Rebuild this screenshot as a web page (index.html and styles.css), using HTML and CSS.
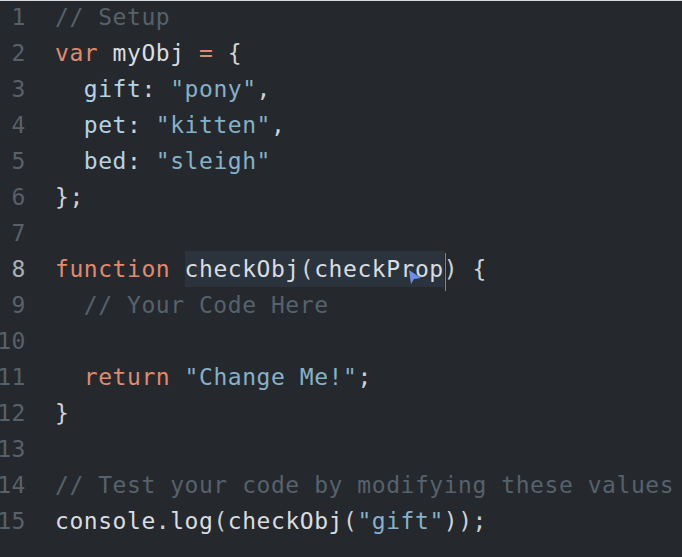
FILE: index.html
```html
<!DOCTYPE html>
<html>
<head>
<meta charset="utf-8">
<link rel="stylesheet" href="styles.css">
</head>
<body>
<div class="editor">
  <div class="gutter">
    <div class="ln">1</div><div class="ln">2</div><div class="ln">3</div><div class="ln">4</div><div class="ln">5</div>
    <div class="ln">6</div><div class="ln">7</div><div class="ln active">8</div><div class="ln">9</div><div class="ln">10</div>
    <div class="ln">11</div><div class="ln">12</div><div class="ln">13</div><div class="ln">14</div><div class="ln">15</div>
  </div>
  <div class="code">
    <div class="line"><span class="cm">// Setup</span></div>
    <div class="line"><span class="kw">var</span> <span class="id">myObj</span> <span class="op">=</span> <span class="pn">{</span></div>
    <div class="line">  <span class="pr">gift</span><span class="pn">:</span> <span class="st">"pony"</span><span class="pn">,</span></div>
    <div class="line">  <span class="pr">pet</span><span class="pn">:</span> <span class="st">"kitten"</span><span class="pn">,</span></div>
    <div class="line">  <span class="pr">bed</span><span class="pn">:</span> <span class="st">"sleigh"</span></div>
    <div class="line"><span class="pn">};</span></div>
    <div class="line"> </div>
    <div class="line"><span class="kw">function</span> <span class="sel"><span class="id">checkObj</span><span class="pn">(</span><span class="id">checkProp</span><span class="caret"></span><svg class="pointer" width="14" height="16" viewBox="0 0 14 16"><path d="M1 1 L13 9 L6 10 L3 15 Z" fill="#6f8fe6"/></svg></span><span class="pn">)</span> <span class="pn">{</span></div>
    <div class="line">  <span class="cm">// Your Code Here</span></div>
    <div class="line"> </div>
    <div class="line">  <span class="kw">return</span> <span class="st">"Change Me!"</span><span class="pn">;</span></div>
    <div class="line"><span class="pn">}</span></div>
    <div class="line"> </div>
    <div class="line"><span class="cm">// Test your code by modifying these values</span></div>
    <div class="line"><span class="id">console</span><span class="pn">.</span><span class="id">log</span><span class="pn">(</span><span class="id">checkObj</span><span class="pn">(</span><span class="st">"gift"</span><span class="pn">));</span></div>
  </div>
</div>
</body>
</html>
```

FILE: styles.css
```css
html, body {
  margin: 0;
  padding: 0;
  background: #25282c;
  overflow: hidden;
}
body {
  width: 682px;
  height: 557px;
  border-top: 1px solid #d8dadc;
  box-sizing: border-box;
}
.editor {
  display: flex;
  margin-top: -2px;
  font-family: "DejaVu Sans Mono", "Liberation Mono", monospace;
  font-size: 23px;
  letter-spacing: 0.55px;
  line-height: 36px;
  color: #d6dadd;
}
.gutter {
  width: 30px;
  margin-left: -4px;
  text-align: right;
  color: #58616a;
  flex: none;
}
.ln.active {
  color: #a7b0b8;
}
.code {
  margin-left: 29px;
}
.line {
  height: 36px;
  white-space: pre;
}
.cm { color: #56626c; }
.kw { color: #e08a70; }
.id { color: #d9dde0; }
.op { color: #e08a70; }
.pn { color: #cfd3d6; }
.pr { color: #b5d3e3; }
.st { color: #86b1c9; }
.sel {
  position: relative;
  display: inline-block;
  background: #2b333c;
}
.caret {
  position: absolute;
  right: -2px;
  top: 2px;
  width: 1px;
  height: 38px;
  background: #7d8892;
}
.pointer {
  position: absolute;
  right: 22px;
  top: 18px;
}
```
